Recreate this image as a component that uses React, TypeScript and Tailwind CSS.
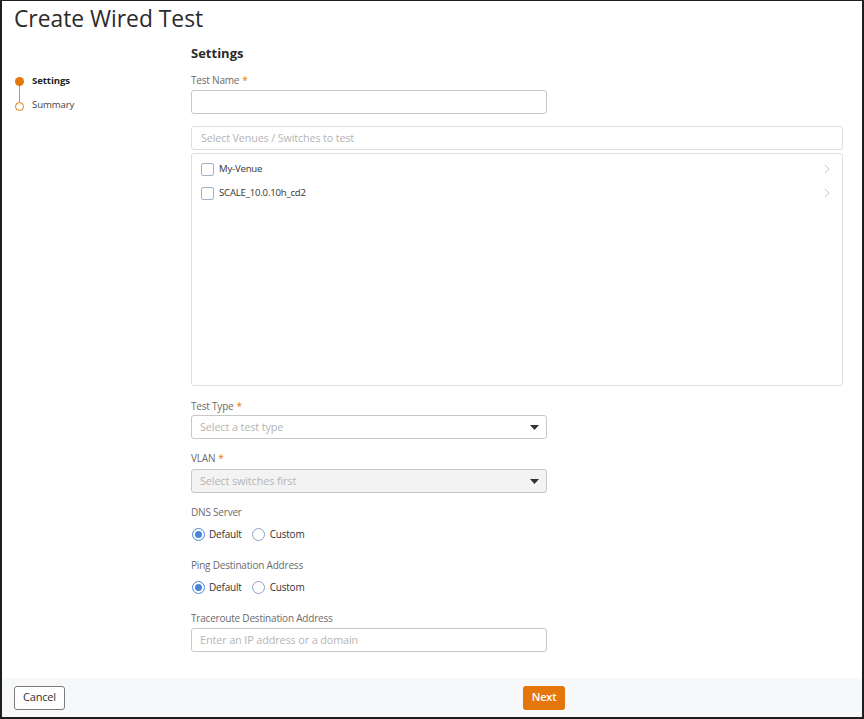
import React from "react";

const font = { fontFamily: '"Open Sans", "Noto Sans", sans-serif' };

function Label({ text, required = false, className = "" }: { text: string; required?: boolean; className?: string }) {
  return (
    <div className={`h-[16px] text-[10px] leading-[16px] tracking-[-0.2px] text-[#6b6b6b] ${className}`}>
      {text}
      {required && <span className="ml-[3px] text-[#e5760c]">*</span>}
    </div>
  );
}

function Caret() {
  return (
    <svg width="9" height="5" viewBox="0 0 9 5" className="mr-[6px]">
      <path d="M0 0 L9 0 L4.5 5 Z" fill="#333" />
    </svg>
  );
}

function Select({ placeholder, disabled = false, className = "" }: { placeholder: string; disabled?: boolean; className?: string }) {
  return (
    <div
      className={`flex h-[24px] w-[356px] items-center justify-between rounded-[3px] border border-[#c8c8c8] pl-[8px] pr-[1px] ${
        disabled ? "bg-[#f3f3f3]" : "bg-white"
      } ${className}`}
    >
      <span className="text-[10.8px] tracking-[-0.1px] text-[#b5b5b5]">{placeholder}</span>
      <Caret />
    </div>
  );
}

function Radio({ checked }: { checked: boolean }) {
  return (
    <span
      className={`flex h-[13px] w-[13px] items-center justify-center rounded-full border ${
        checked ? "border-[#4a86d8]" : "border-[#8aa3c2]"
      } bg-white`}
    >
      {checked && <span className="h-[7px] w-[7px] rounded-full bg-[#4a86d8]" />}
    </span>
  );
}

function RadioGroup({ className = "" }: { className?: string }) {
  return (
    <div className={`flex h-[20px] items-center text-[10px] tracking-[-0.2px] text-[#333] ${className}`}>
      <span className="ml-[1px]">
        <Radio checked />
      </span>
      <span className="ml-[4px]">Default</span>
      <span className="ml-[10px]">
        <Radio checked={false} />
      </span>
      <span className="ml-[5px]">Custom</span>
    </div>
  );
}

function VenueRow({ name }: { name: string }) {
  return (
    <div className="flex h-[24px] items-center pl-[9px] pr-[8px]">
      <span className="h-[13px] w-[13px] rounded-[2px] border border-[#9fb3c9] bg-white" />
      <span className="ml-[5px] text-[9.6px] tracking-[-0.2px] text-[#333]">{name}</span>
      <svg width="6" height="10" viewBox="0 0 6 10" className="ml-auto mr-[4px]">
        <path d="M1 1 L5 5 L1 9" fill="none" stroke="#c4c4c4" strokeWidth="1" />
      </svg>
    </div>
  );
}

export default function App() {
  return (
    <div
      style={font}
      className="flex h-[719px] w-[864px] flex-col border-b-2 border-l-2 border-r-2 border-t border-[#1e1e1e] bg-white"
    >
      <h1 className="ml-[12px] mt-[4px] h-[28px] text-[22.8px] leading-[28px] text-[#2b2b2b]">Create Wired Test</h1>

      <div className="flex flex-1">
        {/* step list */}
        <div className="w-[189px] shrink-0 pl-[12px] pt-[42px]">
          <div className="flex">
            <div className="flex w-[10px] flex-col items-center">
              <span className="mt-[2px] h-[9px] w-[9px] rounded-full bg-[#e5760c]" />
              <span className="h-[16px] w-px bg-[#e5960c]" />
              <span className="h-[9px] w-[9px] rounded-full border border-[#e5760c] bg-white" />
            </div>
            <div className="ml-[8px] flex flex-col text-[9.6px] tracking-[-0.1px]">
              <span className="h-[12px] leading-[12px] font-bold text-[#222]">Settings</span>
              <span className="mt-[12px] h-[12px] leading-[12px] text-[#444]">Summary</span>
            </div>
          </div>
        </div>

        {/* form */}
        <div className="flex w-[652px] flex-col">
          <h2 className="mt-[11px] h-[18px] text-[13px] leading-[18px] font-bold text-[#2b2b2b]">Settings</h2>

          <Label text="Test Name" required className="mt-[10px]" />
          <div className="mt-[2px] h-[24px] w-[356px] rounded-[3px] border border-[#c8c8c8] bg-white" />

          <div className="mt-[12px] flex h-[24px] items-center rounded-[3px] border border-[#dedede] pl-[9px]">
            <span className="text-[10.8px] tracking-[-0.15px] text-[#b5b5b5]">Select Venues / Switches to test</span>
          </div>

          <div className="mt-[3px] h-[233px] rounded-[3px] border border-[#dedede] pt-[3px]">
            <VenueRow name="My-Venue" />
            <VenueRow name="SCALE_10.0.10h_cd2" />
          </div>

          <Label text="Test Type" required className="mt-[12px]" />
          <Select placeholder="Select a test type" className="mt-[1px]" />

          <Label text="VLAN" required className="mt-[11px]" />
          <Select placeholder="Select switches first" disabled className="mt-[3px]" />

          <Label text="DNS Server" className="mt-[11px]" />
          <RadioGroup className="mt-[4px]" />

          <Label text="Ping Destination Address" className="mt-[13px]" />
          <RadioGroup className="mt-[4px]" />

          <Label text="Traceroute Destination Address" className="mt-[13px]" />
          <div className="mt-[2px] flex h-[24px] w-[356px] items-center rounded-[3px] border border-[#c8c8c8] bg-white pl-[8px]">
            <span className="text-[10.8px] tracking-[-0.1px] text-[#b5b5b5]">Enter an IP address or a domain</span>
          </div>
        </div>
      </div>

      {/* action bar */}
      <div className="flex h-[39px] items-center bg-[#f7f8f9] pl-[12px]">
        <button className="h-[24px] w-[51px] rounded-[3px] border border-[#7a7a7a] bg-white text-[11px] tracking-[-0.2px] text-[#333]">
          Cancel
        </button>
        <button className="ml-[458px] h-[24px] w-[42px] rounded-[3px] bg-[#e5760c] text-[11px] font-semibold tracking-[-0.2px] text-white">
          Next
        </button>
      </div>
    </div>
  );
}
